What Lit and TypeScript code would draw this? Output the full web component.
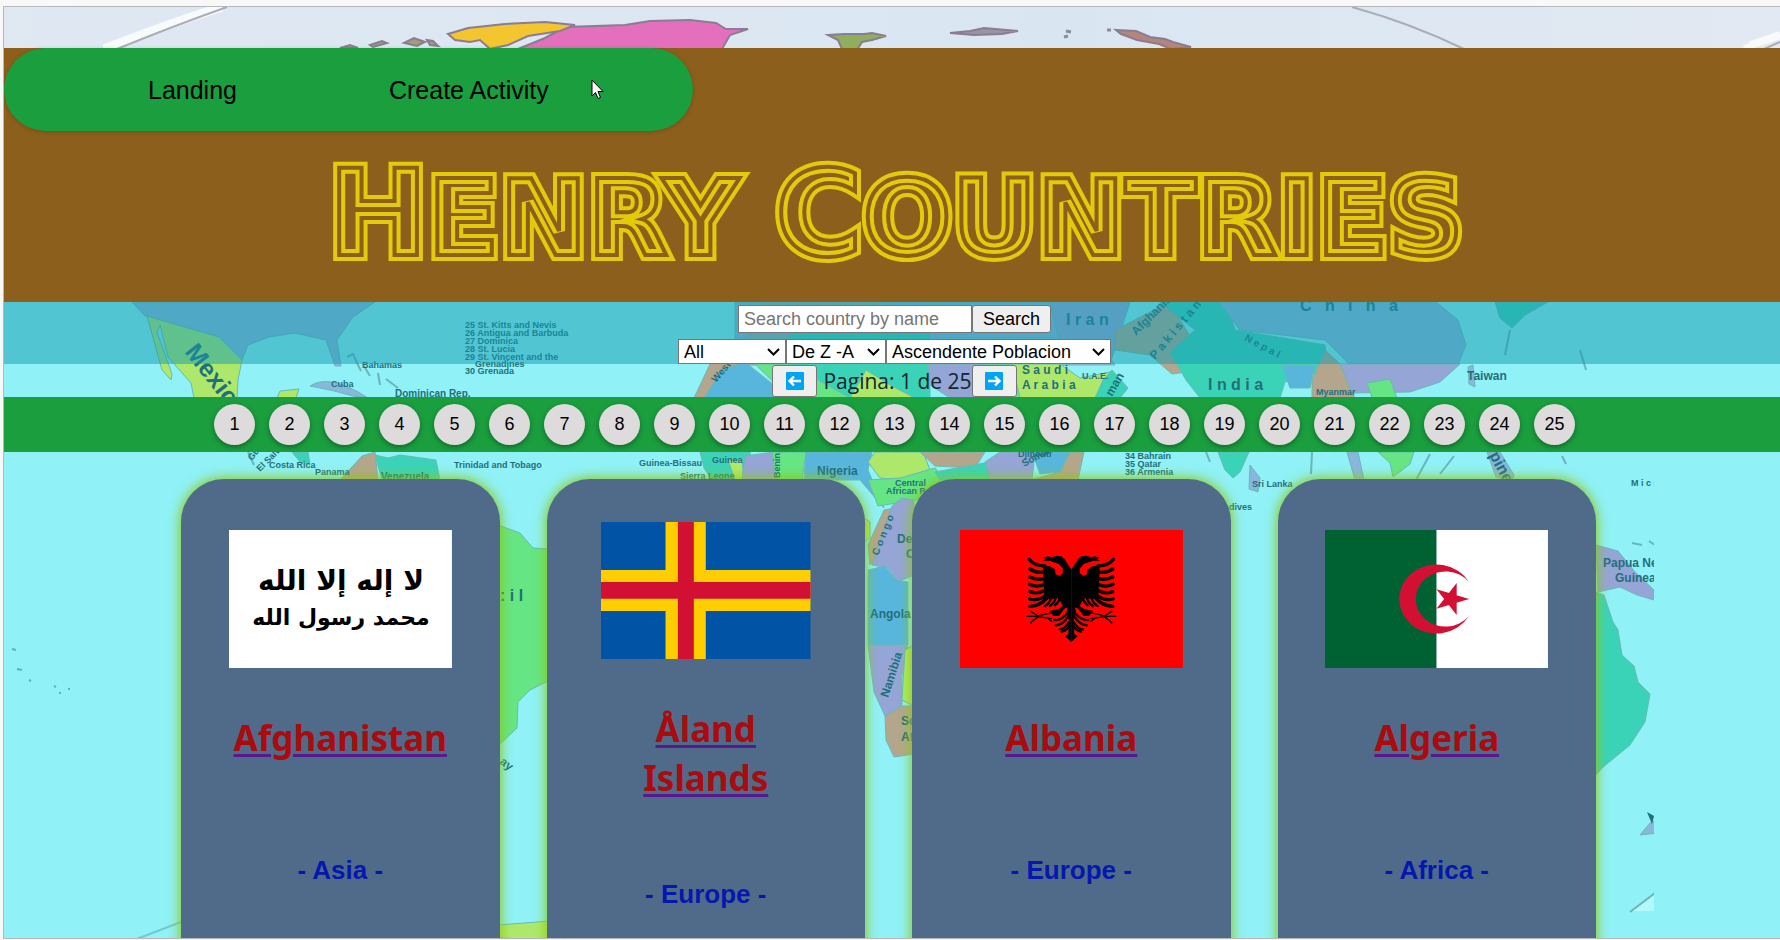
import { LitElement, html, svg, css } from "lit";
import { customElement, property, state } from "lit/decorators.js";

type Flag = "af" | "ax" | "al" | "dz";
interface Country { name: string; continent: string; flag: Flag; }

const COUNTRIES: Country[] = [
  { name: "Afghanistan", continent: "Asia", flag: "af" },
  { name: "Åland Islands", continent: "Europe", flag: "ax" },
  { name: "Albania", continent: "Europe", flag: "al" },
  { name: "Algeria", continent: "Africa", flag: "dz" },
];

/* Backdrop: a faded political world map. */
@customElement("world-map")
class WorldMap extends LitElement {
  static styles = css`
    :host { display: block; }
    svg { display: block; width: 100%; height: 100%; }
    text { font-family: "Liberation Sans", Arial, sans-serif; font-weight: 700; fill: #226f7c; }
    .tiny { font-size: 9px; }
    .small { font-size: 10px; }
    .mid { font-size: 12px; }
    .big { font-size: 16px; }
    .huge { font-size: 25px; }
    .lime { fill: #aee86a; }
    .green { fill: #66e584; }
    .teal { fill: #3bd3b8; }
    .blue { fill: #58b6dc; }
    .sky { fill: #88b6dc; }
    .lilac { fill: #95a5d5; }
    .tan { fill: #b3a68c; }
    .coast { fill: none; stroke: #6ab5b9; stroke-width: 2; }
    .edge { stroke: #69b9b6; stroke-width: 1; }
    .arctic { stroke: #8b7c93; stroke-width: 2; }
  `;
  render() {
    return html`<svg viewBox="4 7 1776 931" preserveAspectRatio="xMinYMin slice" aria-hidden="true">
      <defs>
        <clipPath id="tile"><rect x="4" y="7" width="1650" height="931" /></clipPath>
        <linearGradient id="ice" x1="0" x2="1"><stop offset="0" stop-color="#e0e8f2" /><stop offset=".6" stop-color="#d9e6f1" /><stop offset="1" stop-color="#e3e9f3" /></linearGradient>
      </defs>
      <rect x="4" y="7" width="1776" height="931" fill="#90f1f6" />
      <rect x="4" y="7" width="1776" height="42" fill="url(#ice)" />
      <path d="M222 7Q165 25 104 49" fill="none" stroke="#f8fafc" stroke-width="9" />
      <path d="M227 7Q168 28 117 49" fill="none" stroke="#aaacb6" stroke-width="2" />
      <path d="M1352 7Q1410 23 1464 49" fill="none" stroke="#aaacb6" stroke-width="2" />
      <path d="M1744 48L1780 36M1750 44L1780 34" stroke="#f8fafc" stroke-width="6" />
      <path d="M1764 49L1780 42" stroke="#aaacb6" stroke-width="2" />
      <g class="arctic">
        <path fill="#e470bd" d="M518 49L545 38 565 27 625 25 650 21 690 20 716 23 726 29 748 29 730 35 722 49Z" />
        <path fill="#f3c62f" d="M448 34L468 28 505 24 545 22 575 25 560 31 528 36 508 45 490 49 480 40 470 42 455 40Z" />
        <path fill="#a39c78" d="M404 43l10-5 11 4-8 4zM427 40l6 1 5 5-8-1zM370 45l12-4 5 2-14 4z" />
        <path fill="#ba8b73" d="M340 48l10-3 8 3z" />
        <path fill="#8fae5e" d="M828 35l16-1 20 0 8-1 14 3-14 4-10 2-5 8-15-1-4-9z" />
        <path fill="#96969e" d="M950 33l20-2 14-3 34 3-16 3-28 1z" />
        <path fill="#b4857c" d="M1116 30l20 1 14 6 15 2 8 3 18 5-20 2-12-5-22-4-16-6z" />
      </g>
      <path d="M1066 31l5 1M1064 37l4-1M1107 30l4 0" stroke="#8b8b95" stroke-width="3" />
      <g clip-path="url(#tile)">
        <g class="edge">
          <path class="sky" d="M132 302L145 316 181 326 219 337 242 360 248 345 269 337 295 333 326 340 335 366 341 366 337 340 353 317 375 302Z" />
          <path class="lime" d="M147 316L181 326 219 337 242 360 238 380 237 398 194 398 191 383 168 357 160 325 157 332 172 374 171 380 162 370Z" />
          <path class="lime" d="M277 398L280 391 299 389 296 398Z" />
          <path class="sky" d="M310 386q20-13 58 12l-15-2q-20-6-43-10z" />
          <path class="tan" d="M340 480L362 456 375 452 378 480Z" />
          <path class="teal" d="M375 455L388 458 400 455 436 460 440 480 382 480ZM292 452l16 0 2 12-10-2z" />
          <path class="green" d="M498 525L520 533 533 548 550 549 550 680 530 690 518 702 517 728 498 746Z" />
          <path class="lime" d="M498 925L550 921 550 940 498 938Z" />
        </g>
        <path class="coast" d="M347 357l6-3 4 9 4 8m3-5l6 10m8-3l2 12m6-6l12 9M248 452l6 13" />
        <path class="coast" d="M134 940L181 922 300 893" opacity=".7" />
        <path d="M12 649l4 1M17 669l5 1M29 680l2 1M54 686l2 1M59 693l2 0M68 689l2 0" stroke="#5fb3b8" stroke-width="2" />
        <g class="edge">
          <path class="sky" d="M735 302L1070 302 1115 365 735 365Z" />
          <path class="tan" d="M760 302L880 302 870 365 735 365Z" opacity=".5" />
          <path class="teal" d="M790 330L930 330 930 398 790 398Z" />
          <path class="tan" d="M694 398L710 364 738 350 745 398Z" />
          <path class="blue" d="M704 398L722 370 745 362 790 398Z" />
          <path class="green" d="M755 364L790 364 850 398 790 398Z" />
          <path class="lime" d="M866 370L890 385 915 398 850 398Z" />
          <path class="lilac" d="M928 364L985 364 985 398 950 398 930 385Z" />
          <path class="green" d="M985 364L1020 364 1025 398 985 398Z" />
          <path class="lime" d="M1012 364L1060 364 1080 378 1110 372 1115 383 1095 398 1020 398Z" />
          <path class="teal" d="M1103 380L1112 370 1128 388 1120 398 1095 398Z" />
          <path class="lilac" d="M1050 302L1130 302 1110 364 1060 345Z" />
          <path class="tan" d="M1115 330L1170 302 1195 345 1186 372 1172 374 1150 355 1115 350Z" />
          <path class="teal" d="M1160 302L1226 302 1235 330 1325 345 1328 370 1285 382 1280 398 1200 398 1186 380 1170 352 1195 330Z" />
          <path class="sky" d="M1218 302L1436 302 1458 320 1466 345 1458 365 1350 365 1325 340 1240 330Z" />
          <path class="blue" d="M1282 365L1315 365 1310 388 1290 388Z" />
          <path class="tan" d="M1325 350L1340 364 1355 398 1312 398 1312 380Z" />
          <path class="lilac" d="M1340 364L1460 364 1440 382 1410 392 1352 393Z" />
          <path class="green" d="M1367 383L1390 379 1397 398 1372 398Z" />
          <path class="teal" d="M1495 302L1548 302 1525 315 1512 328 1500 318Z" />
          <path class="sky" d="M1468 367l5-2 2 22-6-3z" />
        </g>
        <g class="edge">
          <path class="teal" d="M700 452L750 452 752 480 712 480 704 468Z" />
          <path class="lime" d="M728 460L742 460 744 480 735 480Z" />
          <path class="lilac" d="M745 456L774 452 776 480 742 480Z" />
          <path class="green" d="M772 452L806 452 802 480 776 480Z" />
          <path class="blue" d="M806 452L872 452 868 470 884 508 860 480 804 480Z" />
          <path class="lime" d="M875 452L923 452 930 470 900 480 880 478 868 462Z" />
          <path class="tan" d="M920 452L985 452 975 468 935 466Z" />
          <path class="green" d="M868 480L900 478 935 468 945 480 916 500 878 506Z" />
          <path class="teal" d="M935 472L990 462 995 480 940 480Z" />
          <path class="lilac" d="M985 462L1000 452 1035 452 1032 480 990 480Z" />
          <path class="blue" d="M1032 452L1070 452 1060 472 1040 474Z" />
          <path class="tan" d="M1070 452L1084 452 1078 480 1030 480 1060 472Z" />
        </g>
        <g class="edge">
          <path class="lime" d="M864 518l6 4 0 16-6 4z" />
          <path class="tan" d="M870 565L868 545 884 510 894 508 890 540 878 560Z" />
          <path class="lilac" d="M892 506L902 498 914 500 914 575 898 582 888 568 872 565Z" />
          <path class="blue" d="M868 570L885 566 896 580 908 582 908 645 868 645Z" />
          <path class="lilac" d="M868 645L908 646 902 675 902 708 885 716 874 692Z" />
          <path class="lime" d="M905 650L914 645 914 706 902 700Z" />
          <path class="tan" d="M885 716L902 706 914 706 914 754 894 757 886 740Z" />
          <path class="teal" d="M1218 452L1249 452 1240 472 1233 478 1225 470Z" />
          <path class="sky" d="M1250 465L1260 478 1258 492 1249 489Z" />
          <path class="sky" d="M1347 452L1358 452 1364 480 1355 480Z" />
          <path class="green" d="M1378 452L1414 452 1410 464 1393 477 1390 463Z" />
          <path class="sky" d="M1487 452L1500 452 1514 475 1512 481 1496 477Z" />
          <path class="lilac" d="M1596 545L1618 551 1635 572 1654 590 1654 600 1637 595 1620 587 1598 592Z" />
          <path class="teal" d="M1596 592L1604 595 1613 622 1618 630 1622 655 1634 666 1638 682 1650 694 1645 722 1630 745 1602 768 1596 775Z" />
          <path class="sky" d="M1640 835l10-12 8-4 0 14z" />
        </g>
        <path d="M1647 812l7 4-2 8z" fill="#226f7c" />
        <path class="coast" d="M1416 480l14-26M1440 474l14-18M1312 452l-1 22M1206 452l4 10M1562 456l4 8M1580 350l6 20M1510 330l-5 25M1632 543l10 2M1649 541l6 4" />
        <path d="M1632 911L1654 893V911Z" fill="#b4f8fb" /><path class="coast" d="M1630 912L1655 893" />
        <g class="tiny">
          <text x="465" y="328">25 St. Kitts and Nevis</text><text x="465" y="336">26 Antigua and Barbuda</text>
          <text x="465" y="344">27 Dominica</text><text x="465" y="352">28 St. Lucia</text>
          <text x="465" y="360">29 St. Vincent and the</text><text x="475" y="367">Grenadines</text>
          <text x="465" y="374">30 Grenada</text><text x="362" y="368">Bahamas</text><text x="331" y="387">Cuba</text>
          <text x="269" y="468">Costa Rica</text><text x="315" y="475">Panama</text>
          <text x="454" y="468">Trinidad and Tobago</text><text x="639" y="466">Guinea-Bissau</text>
          <text x="712" y="463">Guinea</text><text x="680" y="479">Sierra Leone</text>
          <text x="895" y="486">Central</text><text x="886" y="494">African Rep.</text>
          <text x="1018" y="457">Djibouti</text><text x="1125" y="459">34 Bahrain</text>
          <text x="1125" y="467">35 Qatar</text><text x="1125" y="475">36 Armenia</text>
          <text x="1252" y="487">Sri Lanka</text><text x="1229" y="510">dives</text><text x="1316" y="395">Myanmar</text>
          <text x="1082" y="379">U.A.E.</text><text x="1631" y="486">M i c r</text>
          <text transform="translate(252 461) rotate(-52)">Gua</text><text transform="translate(260 472) rotate(-45)">El Salv</text>
          <text transform="translate(780 478) rotate(-90)">Benin</text>
        </g>
        <g class="small">
          <text x="395" y="397">Dominican Rep.</text><text x="381" y="480">Venezuela</text>
          <text transform="translate(716 383) rotate(-50)">Western</text><text transform="translate(1244 340) rotate(28)">N e p a l</text>
          <text transform="translate(1024 467) rotate(-28)">Somalia</text>
          <text transform="translate(878 556) rotate(-68)">C o n g o</text>
        </g>
        <g class="mid">
          <text x="817" y="475">Nigeria</text><text x="870" y="618">Angola</text><text x="897" y="543">De</text><text x="906" y="558">C</text>
          <text x="901" y="725">So</text><text x="901" y="741">Afr</text><text x="1022" y="374">S a u d i</text><text x="1022" y="389">A r a b i a</text>
          <text x="1467" y="380">Taiwan</text><text x="1603" y="567">Papua New</text><text x="1615" y="582">Guinea</text>
          <text transform="translate(888 698) rotate(-72)">Namibia</text>
          <text transform="translate(1112 397) rotate(-60)">man</text><text transform="translate(499 763) rotate(38)">ay</text>
          <text transform="translate(1136 336) rotate(-45)">Afghanistan</text><text transform="translate(1155 360) rotate(-50)">P a k i s t a n</text>
        </g>
        <g class="big">
          <text x="500" y="601">: i l</text><text x="1208" y="390">I n d i a</text><text x="1066" y="325">I r a n</text>
          <text x="1300" y="311">C &nbsp; h &nbsp; i &nbsp; n &nbsp; a</text>
          <text transform="translate(1489 455) rotate(62)">pine</text>
        </g>
        <text class="huge" transform="translate(184 352) rotate(52)">Mexico</text>
      </g>
    </svg>`;
  }
}

@customElement("country-card")
class CountryCard extends LitElement {
  @property({ attribute: false }) country!: Country;

  static styles = css`
    :host {
      display: flex; flex-direction: column; justify-content: space-around; align-items: center;
      box-sizing: border-box; min-height: 577px; padding-top: 4px; border-radius: 43px;
      background: #506b8a; box-shadow: 0 0 12px 1px #8bc80d; text-align: center;
    }
    .top { display: flex; flex-direction: column; align-items: center; gap: 45px; width: 70%; }
    .flag { display: block; width: 100%; height: 138px; }
    .flag.ax { width: 94%; height: 137px; }
    a { color: #551a8b; text-decoration: underline; text-decoration-thickness: 3px; text-underline-offset: 3px; }
    .name { color: #a80c0e; }
    h2 { margin: 0; font: 700 35px/49px "Noto Sans", "Open Sans", sans-serif; }
    h3 { margin: 0; font: 700 26px/30px "Liberation Sans", Arial, sans-serif; color: #0518ad; }
    .foot { height: 30px; }
    .script { font-family: "DejaVu Sans", sans-serif; font-weight: 700; }
    .line1 { font-size: 28px; }
    .line2 { font-size: 22px; }
  `;

  private flag() {
    switch (this.country.flag) {
      case "af":
        return html`<svg class="flag" viewBox="0 0 223 138" preserveAspectRatio="none" role="img" aria-label="Flag">
          <rect width="223" height="138" fill="#fff" />
          <g class="script" text-anchor="middle" direction="rtl">
            <text class="line1" x="112" y="60">لا إله إلا الله</text>
            <text class="line2" x="112" y="95">محمد رسول الله</text>
          </g>
        </svg>`;
      case "ax":
        return html`<svg class="flag ax" viewBox="0 0 630 411" preserveAspectRatio="none" role="img" aria-label="Flag">
          <rect width="630" height="411" fill="#0053a5" />
          <path fill="#ffce00" d="M194 0H315V411H194ZM0 144H630V267H0Z" />
          <path fill="#d21034" d="M231 0H279V411H231ZM0 180H630V230H0Z" />
        </svg>`;
      case "al": {
        const half = svg`
          <path d="M333 118L322 102 312 86 303 79 288 77 275 82 262 79 247 84 258 86 248 92 268 92 278 96 296 102 308 116 307 130 298 138 286 133 284 118 268 108 250 107 248 120 252 195 268 208 292 204 300 214 308 228 296 236 268 243 280 258 296 258 312 236 322 232 318 250 326 270 324 312 314 318 333 336Z" />
          <g fill="none" stroke="#000" stroke-width="10" stroke-linecap="round">
            <path d="M207 88Q222 108 254 108M209 117Q228 130 254 126M209 141Q230 152 254 145M208 163Q230 174 254 163M209 185Q232 194 256 180M208 207Q236 214 258 194M209 229Q240 228 262 202" />
            <path stroke-width="7" d="M254 228Q268 220 272 206M269 228Q283 218 286 204M284 226Q296 216 298 206M282 270Q300 274 322 250M286 286Q308 284 322 262M298 298Q314 298 326 276M304 305Q318 302 328 288" />
            <path stroke-width="4" d="M200 259L226 259 276 248M212 277L234 260 274 266M212 244L234 258M220 270L212 279M258 262L274 274" />
          </g>`;
        return html`<svg class="flag" viewBox="0 0 667 414" preserveAspectRatio="none" role="img" aria-label="Flag">
          <rect width="667" height="414" fill="#f00" />
          <g>${half}</g><g transform="translate(666 0) scale(-1 1)">${half}</g>
        </svg>`;
      }
      default:
        return html`<svg class="flag" viewBox="0 0 900 600" preserveAspectRatio="none" role="img" aria-label="Flag">
          <rect width="900" height="600" fill="#fff" /><rect width="450" height="600" fill="#006233" />
          <path fill="#d21034" d="M580 225A150 150 0 1 0 580 375A120 120 0 1 1 580 225ZM582 300L450 342.9 531.6 230.6 531.6 369.4 450 257.1Z" />
        </svg>`;
    }
  }

  render() {
    return html`
      <div class="top">${this.flag()}
        <a href="#"><h2><span class="name">${this.country.name}</span></h2></a>
      </div>
      <h3>- ${this.country.continent} -</h3>
      <div class="foot"></div>`;
  }
}

@customElement("app-root")
class AppRoot extends LitElement {
  @state() private page = 1;
  private readonly pages = 25;

  static styles = css`
    :host { display: block; box-sizing: border-box; height: 100vh; padding: 6px 0 1px 3px; background: #f8f8f8; overflow: hidden; }
    * { box-sizing: border-box; }
    .frame { position: relative; height: 100%; overflow: hidden; border: solid #b5b9b9; border-width: 1px 0 1px 1px; font-family: "Liberation Sans", Arial, sans-serif; }
    .map { position: absolute; inset: 0; }
    .content { position: relative; padding-top: 41px; }
    header { display: flex; flex-direction: column; align-items: flex-start; background: #8d5f1c; }
    nav { display: flex; align-items: center; gap: 152px; height: 83px; padding: 0 144px; border-radius: 42px; background: #1a9e3e; box-shadow: 0 1px 4px rgba(0, 0, 0, .2); }
    nav a { color: #000; font-size: 25px; line-height: 30px; text-decoration: none; }
    h1 { width: 100%; margin: 0; }
    .logo { display: block; width: 100%; height: 171px; }
    .logo text { font: 700 105px "DejaVu Sans", sans-serif; text-transform: uppercase; text-anchor: middle; }
    .logo .cap { font-size: 119px; }
    .outer { fill: #8d5f1c; stroke: #e3cb0c; stroke-width: 12px; }
    .inner { fill: none; stroke: #8d5f1c; stroke-width: 4px; }
    .filters { display: flex; flex-direction: column; align-items: center; gap: 6px; padding: 3px 0 0 5px; height: 62px; background: rgba(20, 153, 175, .5); }
    .row { display: flex; }
    input, select, button { margin: 0; font: 18px "Liberation Sans", Arial, sans-serif; color: #000; }
    input { width: 234px; height: 28px; padding: 1px 5px; border: 1px solid #767676; border-radius: 0; background: #fff; }
    input::placeholder { color: #757575; }
    button { border: 1px solid #767676; border-radius: 3px; background: #efefef; }
    .search { width: 79px; height: 28px; padding: 0; }
    .pick { position: relative; display: flex; }
    select { appearance: none; height: 25px; padding: 0 26px 0 5px; border: 1px solid #767676; border-radius: 0; background: #fff; }
    .pick svg { position: absolute; right: 6px; top: 9px; width: 13px; height: 8px; pointer-events: none; }
    .w1 { width: 108px; } .w2 { width: 100px; } .w3 { width: 225px; }
    .pager { display: flex; justify-content: center; align-items: center; height: 33px; padding-left: 5px; font: 21px/32px "Open Sans", "Noto Sans", sans-serif; color: #12262c; }
    .pager span { padding-left: 6px; }
    .step { display: grid; place-items: center; width: 45px; height: 32px; padding: 0; }
    .step svg { width: 18px; height: 18px; }
    .numbers { display: flex; justify-content: center; align-items: center; gap: 14px; height: 55px; padding-left: 5px; background: #1a9e3e; }
    .numbers button { flex: none; width: 41px; height: 41px; padding: 0; border: 0; border-radius: 50%; background: #dddbdb; box-shadow: 0 2px 5px rgba(0, 0, 0, .35); }
    .cards { display: grid; grid-template-columns: repeat(4, 1fr); gap: 47px; margin-top: 27px; padding: 0 184px 0 177px; align-items: start; }
    .cursor { position: absolute; left: 587px; top: 72px; width: 13px; height: 21px; }
  `;

  private select(label: string, cls: string) {
    return html`<div class="pick">
      <select class=${cls} aria-label=${label}><option>${label}</option></select>
      <svg viewBox="0 0 13 8" aria-hidden="true"><path d="M1 1L6.500 6.500 12 1" fill="none" stroke="#000" stroke-width="2" /></svg>
    </div>`;
  }

  private step(delta: number, label: string) {
    return html`<button class="step" aria-label=${label} @click=${() => this.go(this.page + delta)}>
      <svg viewBox="0 0 18 18" aria-hidden="true"><rect width="18" height="18" rx="1" fill="#00a4f5" />
        <path d=${delta < 0 ? "M15 9H4M8 4.500L3.500 9 8 13.500" : "M3 9H14M10 4.500L14.500 9 10 13.500"} fill="none" stroke="#fff" stroke-width="2.400" />
      </svg></button>`;
  }

  private go(n: number) { this.page = Math.min(this.pages, Math.max(1, n)); }

  render() {
    return html`<div class="frame">
      <world-map class="map"></world-map>
      <div class="content">
        <header>
          <nav><a href="#">Landing</a><a href="#">Create Activity</a></nav>
          <h1><svg class="logo" viewBox="0 0 1776 171">
            <defs><text id="word" x="892" y="124"><tspan class="cap">H</tspan>enry <tspan class="cap">C</tspan>ountries</text></defs>
            <use href="#word" class="outer" /><use href="#word" class="inner" />
          </svg></h1>
        </header>
        <section class="filters">
          <div class="row"><input type="text" aria-label="Search country by name" placeholder="Search country by name" /><button class="search">Search</button></div>
          <div class="row">${this.select("All", "w1")}${this.select("De Z -A", "w2")}${this.select("Ascendente Poblacion", "w3")}</div>
        </section>
        <div class="pager">${this.step(-1, "Previous")}<span>Pagina: ${this.page} de ${this.pages}</span>${this.step(1, "Next")}</div>
        <div class="numbers">${Array.from({ length: this.pages }, (_, i) => html`<button @click=${() => this.go(i + 1)}>${i + 1}</button>`)}</div>
        <main class="cards">${COUNTRIES.map((c) => html`<country-card .country=${c}></country-card>`)}</main>
      </div>
      <svg class="cursor" viewBox="0 0 13 21" aria-hidden="true"><path d="M1 1V17L4.500 13.500 7 19.500 9.500 18.500 7 12.500H12Z" fill="#fff" stroke="#000" stroke-width="1" /></svg>
    </div>`;
  }
}
